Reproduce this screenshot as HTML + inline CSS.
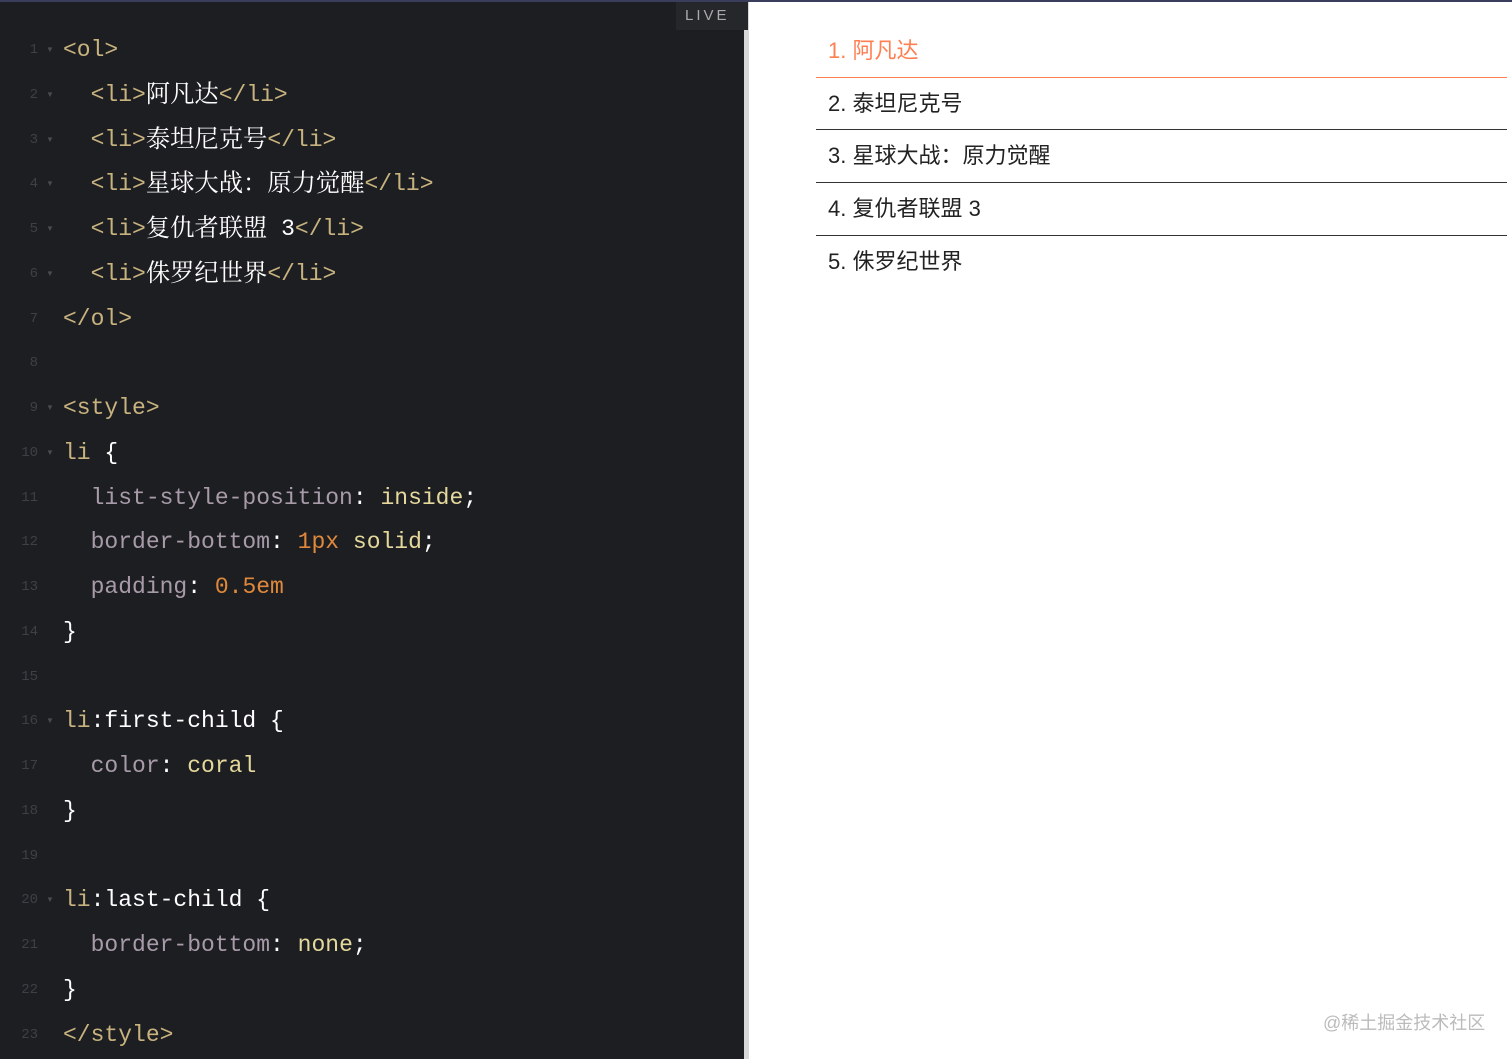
<!DOCTYPE html>
<html><head><meta charset="utf-8"><style>
*{margin:0;padding:0;box-sizing:border-box}
body{width:1512px;height:1059px;overflow:hidden;background:#fff;position:relative;font-family:"Liberation Sans","Noto Sans CJK SC",sans-serif}
#topbar{position:absolute;left:0;top:0;width:1512px;height:2px;background:#3b3d5c}
#code{position:absolute;left:0;top:2px;width:744px;height:1057px;background:#1d1e22}
#div{position:absolute;left:744px;top:2px;width:5px;height:1057px;background:#d8d8d8}
#live{position:absolute;left:676px;top:2px;width:72px;height:28px;background:#26272b;color:#aaa;font:15px "Liberation Sans",sans-serif;letter-spacing:3px;padding:5px 0 0 9px}
.ln{position:absolute;left:0;width:38px;text-align:right;color:#3f4046;font:14px/30px "Liberation Mono",monospace}
.ar{position:absolute;left:46px;color:#4a4b52;font-size:8px;line-height:30px}
.c{position:absolute;left:63px;white-space:pre;font:23px/30px "Liberation Mono","Noto Sans CJK SC",monospace;color:#fff;height:30px}
.c b{font-weight:normal;font-family:"Noto Serif CJK SC","Noto Sans CJK SC",serif;font-size:24.3px;line-height:30px;vertical-align:top;position:relative;top:-3px}
.t{color:#c8b37f}.p{color:#a89ba9}.v{color:#e5d89c}.n{color:#e0893b}
ol{position:absolute;left:816px;top:25px;width:691px;list-style:none}
li{height:52.7px;border-bottom:1px solid #333;padding:0 0 0 12px;font-size:22px;line-height:52px;color:#222}
li:first-child{color:coral;border-color:coral}
li:last-child{border:none}
#wm{position:absolute;left:1323px;top:1009px;color:#bbb;font-size:18px}
</style></head><body>
<div id="topbar"></div>
<div id="code"></div>
<div id="div"></div>
<div id="live">LIVE</div>
<ol><li>1. 阿凡达</li><li>2. 泰坦尼克号</li><li>3. 星球大战：原力觉醒</li><li>4. 复仇者联盟 3</li><li>5. 侏罗纪世界</li></ol>
<div id="wm">@稀土掘金技术社区</div>
<div style="position:absolute;left:0;top:0">
<div class="ln" style="top:35px">1</div><div class="ar" style="top:35px">▼</div><div class="c t" style="top:35px">&lt;ol&gt;</div>
<div class="ln" style="top:80px">2</div><div class="ar" style="top:80px">▼</div><div class="c" style="top:80px">  <span class="t">&lt;li&gt;</span><b>阿凡达</b><span class="t">&lt;/li&gt;</span></div>
<div class="ln" style="top:125px">3</div><div class="ar" style="top:125px">▼</div><div class="c" style="top:125px">  <span class="t">&lt;li&gt;</span><b>泰坦尼克号</b><span class="t">&lt;/li&gt;</span></div>
<div class="ln" style="top:169px">4</div><div class="ar" style="top:169px">▼</div><div class="c" style="top:169px">  <span class="t">&lt;li&gt;</span><b>星球大战：原力觉醒</b><span class="t">&lt;/li&gt;</span></div>
<div class="ln" style="top:214px">5</div><div class="ar" style="top:214px">▼</div><div class="c" style="top:214px">  <span class="t">&lt;li&gt;</span><b>复仇者联盟</b> 3<span class="t">&lt;/li&gt;</span></div>
<div class="ln" style="top:259px">6</div><div class="ar" style="top:259px">▼</div><div class="c" style="top:259px">  <span class="t">&lt;li&gt;</span><b>侏罗纪世界</b><span class="t">&lt;/li&gt;</span></div>
<div class="ln" style="top:304px">7</div><div class="c t" style="top:304px">&lt;/ol&gt;</div>
<div class="ln" style="top:348px">8</div>
<div class="ln" style="top:393px">9</div><div class="ar" style="top:393px">▼</div><div class="c t" style="top:393px">&lt;style&gt;</div>
<div class="ln" style="top:438px">10</div><div class="ar" style="top:438px">▼</div><div class="c" style="top:438px"><span class="t">li</span> {</div>
<div class="ln" style="top:483px">11</div><div class="c" style="top:483px">  <span class="p">list-style-position</span>: <span class="v">inside</span>;</div>
<div class="ln" style="top:527px">12</div><div class="c" style="top:527px">  <span class="p">border-bottom</span>: <span class="n">1px</span> <span class="v">solid</span>;</div>
<div class="ln" style="top:572px">13</div><div class="c" style="top:572px">  <span class="p">padding</span>: <span class="n">0.5em</span></div>
<div class="ln" style="top:617px">14</div><div class="c" style="top:617px">}</div>
<div class="ln" style="top:662px">15</div>
<div class="ln" style="top:706px">16</div><div class="ar" style="top:706px">▼</div><div class="c" style="top:706px"><span class="t">li</span>:first-child {</div>
<div class="ln" style="top:751px">17</div><div class="c" style="top:751px">  <span class="p">color</span>: <span class="v">coral</span></div>
<div class="ln" style="top:796px">18</div><div class="c" style="top:796px">}</div>
<div class="ln" style="top:841px">19</div>
<div class="ln" style="top:885px">20</div><div class="ar" style="top:885px">▼</div><div class="c" style="top:885px"><span class="t">li</span>:last-child {</div>
<div class="ln" style="top:930px">21</div><div class="c" style="top:930px">  <span class="p">border-bottom</span>: <span class="v">none</span>;</div>
<div class="ln" style="top:975px">22</div><div class="c" style="top:975px">}</div>
<div class="ln" style="top:1020px">23</div><div class="c t" style="top:1020px">&lt;/style&gt;</div>
</div>
</body></html>
